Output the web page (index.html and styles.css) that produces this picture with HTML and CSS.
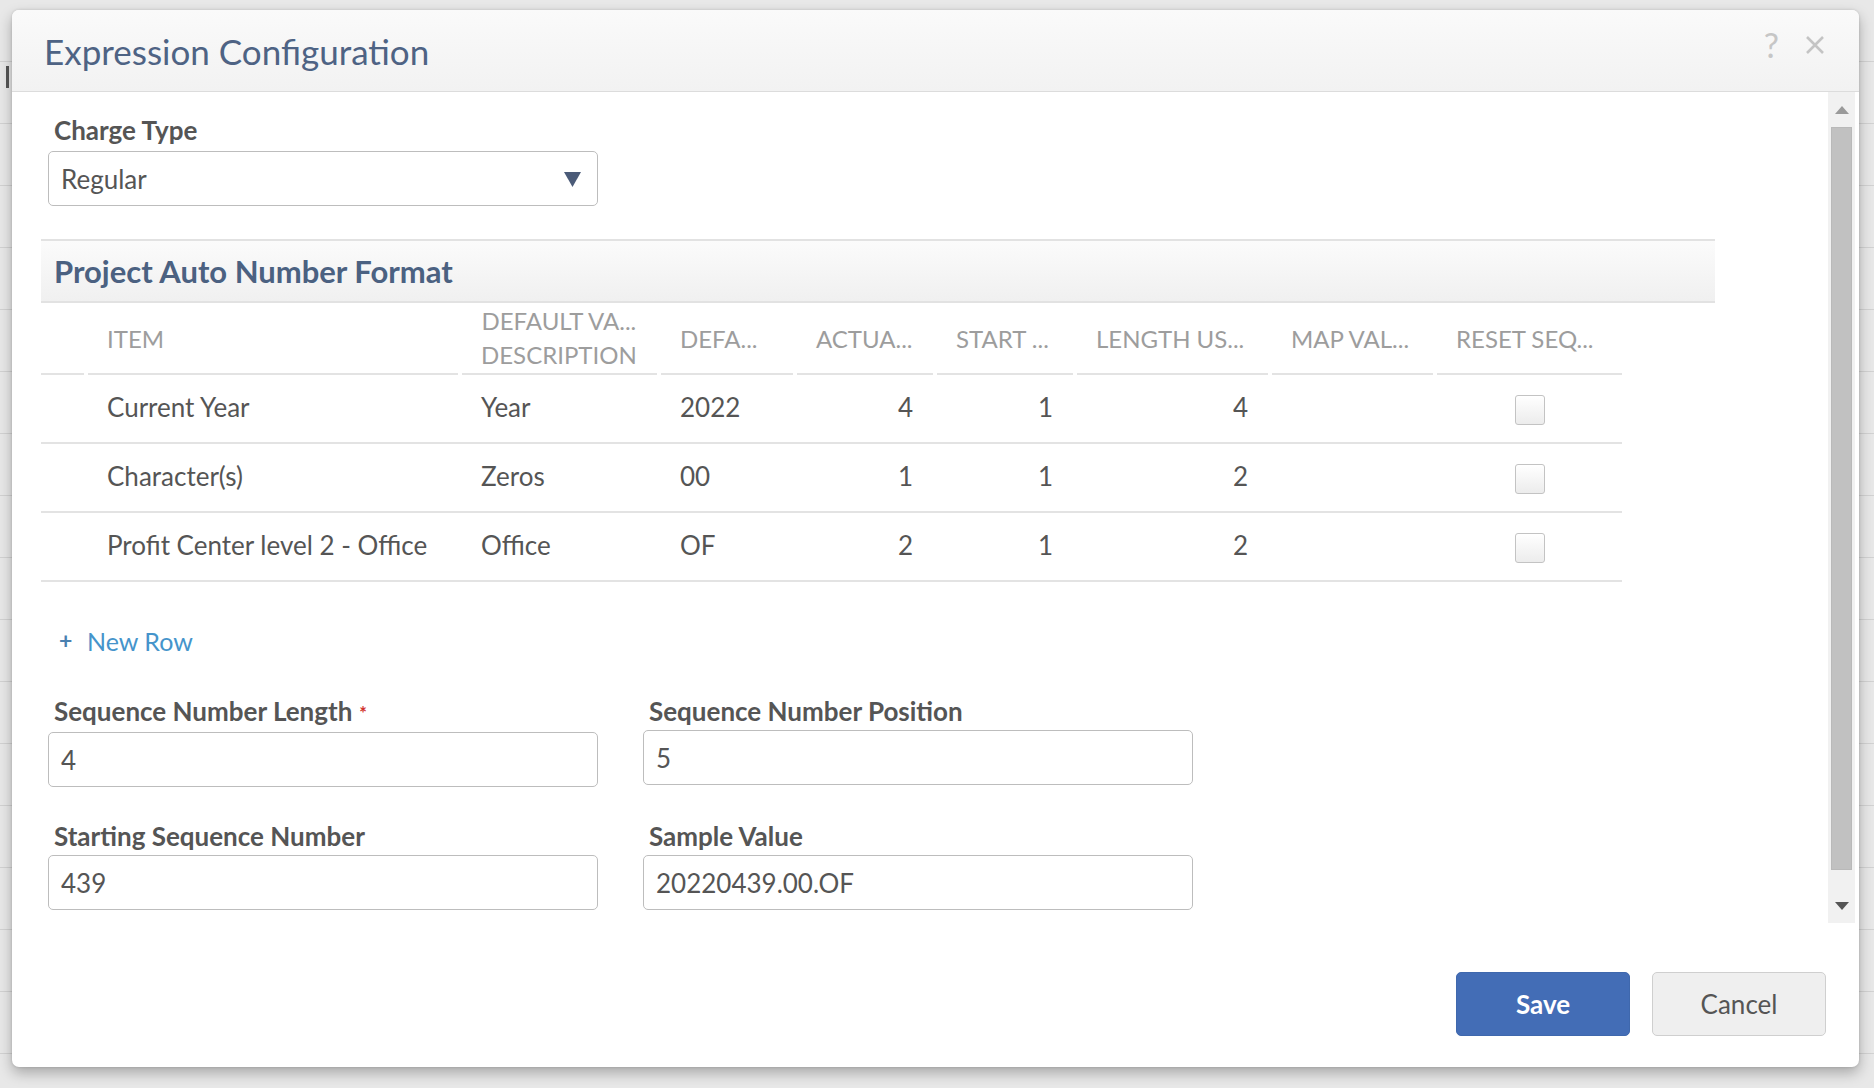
FILE: index.html
```html
<!DOCTYPE html>
<html lang="en">
<head>
<meta charset="utf-8">
<title>Expression Configuration</title>
<link rel="stylesheet" href="styles.css">
</head>
<body>
<div class="backdrop">
  <div class="dialog">
    <div class="dlg-header">
      <h1 class="dlg-title">Expression Configuration</h1>
      <div class="hdr-icons">
        <span class="hdr-help">?</span>
        <svg class="hdr-close" width="20" height="20" viewBox="0 0 20 20"><path d="M2 2 L18 18 M18 2 L2 18" stroke="#c4c4c4" stroke-width="2.6" fill="none"/></svg>
      </div>
    </div>
    <div class="dlg-body">
      <div class="content">
        <div class="field field-charge">
          <label class="field-label">Charge Type</label>
          <div class="select">
            <span class="select-value">Regular</span>
            <svg class="select-arrow" width="17" height="15" viewBox="0 0 17 15"><polygon points="0,0 17,0 8.5,15" fill="#4b5b78"/></svg>
          </div>
        </div>

        <div class="section-band">Project Auto Number Format</div>

        <div class="grid-table">
          <div class="grow ghead">
            <div class="hc"></div>
            <div class="hc">ITEM</div>
            <div class="hc hc-two"><span class="two-lines"><span>DEFAULT VA...</span><span>DESCRIPTION</span></span></div>
            <div class="hc">DEFA...</div>
            <div class="hc">ACTUA...</div>
            <div class="hc">START ...</div>
            <div class="hc">LENGTH US...</div>
            <div class="hc">MAP VAL...</div>
            <div class="hc">RESET SEQ...</div>
          </div>
          <div class="grow gdata">
            <div class="dc"></div>
            <div class="dc">Current Year</div>
            <div class="dc">Year</div>
            <div class="dc">2022</div>
            <div class="dc num">4</div>
            <div class="dc num">1</div>
            <div class="dc num">4</div>
            <div class="dc"></div>
            <div class="dc chk"><span class="checkbox"></span></div>
          </div>
          <div class="grow gdata">
            <div class="dc"></div>
            <div class="dc">Character(s)</div>
            <div class="dc">Zeros</div>
            <div class="dc">00</div>
            <div class="dc num">1</div>
            <div class="dc num">1</div>
            <div class="dc num">2</div>
            <div class="dc"></div>
            <div class="dc chk"><span class="checkbox"></span></div>
          </div>
          <div class="grow gdata">
            <div class="dc"></div>
            <div class="dc">Profit Center level 2 - Office</div>
            <div class="dc">Office</div>
            <div class="dc">OF</div>
            <div class="dc num">2</div>
            <div class="dc num">1</div>
            <div class="dc num">2</div>
            <div class="dc"></div>
            <div class="dc chk"><span class="checkbox"></span></div>
          </div>
        </div>

        <div class="new-row"><span class="plus">+</span><span class="new-row-text">New Row</span></div>

        <div class="fields-grid">
          <div class="field">
            <label class="field-label">Sequence Number Length<span class="req">*</span></label>
            <div class="input">4</div>
          </div>
          <div class="field">
            <label class="field-label">Sequence Number Position</label>
            <div class="input">5</div>
          </div>
          <div class="field">
            <label class="field-label">Starting Sequence Number</label>
            <div class="input">439</div>
          </div>
          <div class="field">
            <label class="field-label">Sample Value</label>
            <div class="input">20220439.00.OF</div>
          </div>
        </div>
      </div>
      <div class="scrollbar">
        <div class="sb-arrow"><svg width="14" height="8" viewBox="0 0 14 8"><polygon points="0,8 14,8 7,0" fill="#9a9a9a"/></svg></div>
        <div class="sb-track"><div class="sb-thumb"></div></div>
        <div class="sb-arrow"><svg width="14" height="8" viewBox="0 0 14 8"><polygon points="0,0 14,0 7,8" fill="#555"/></svg></div>
      </div>
    </div>
    <div class="dlg-footer">
      <button class="btn btn-save">Save</button>
      <button class="btn btn-cancel">Cancel</button>
    </div>
  </div>
</div>
</body>
</html>
```
FILE: styles.css
```css
* { box-sizing: border-box; }

html, body {
  margin: 0;
  padding: 0;
  width: 1874px;
  height: 1088px;
  overflow: hidden;
}

body {
  font-family: "Lato", "Liberation Sans", sans-serif;
  color: #555;
  background-color: #e6e6e6;
  background-image: repeating-linear-gradient(to bottom, #e8e8e8 0, #e8e8e8 61px, #d2d2d2 61px, #d2d2d2 62px);
}

.backdrop {
  position: relative;
  height: 1088px;
  padding: 10px 15px 21px 12px;
  display: flex;
}

.backdrop::before {
  content: "";
  position: absolute;
  left: 6px;
  top: 66px;
  width: 3px;
  height: 22px;
  background: #555;
}

.dialog {
  position: relative;
  width: 1847px;
  height: 1057px;
  background: #fff;
  border-radius: 7px;
  box-shadow: 0 6px 14px rgba(0, 0, 0, 0.28), 0 0 3px rgba(0, 0, 0, 0.15);
  display: flex;
  flex-direction: column;
  overflow: hidden;
}

/* header */
.dlg-header {
  height: 82px;
  flex: none;
  display: flex;
  align-items: center;
  justify-content: space-between;
  padding: 0 34px 0 32px;
  background: linear-gradient(to bottom, #fafafa, #f2f2f2);
  border-bottom: 1px solid #dcdcdc;
}

.dlg-title {
  margin: 0;
  font-family: "Lato", sans-serif;
  font-weight: 400;
  font-size: 35px;
  color: #4e6384;
}

.hdr-icons {
  display: flex;
  align-items: center;
  gap: 26px;
  margin-top: -12px;
}

.hdr-help {
  font-family: "Lato", sans-serif;
  font-size: 34px;
  font-weight: 400;
  color: #c6c6c6;
  line-height: 1;
}

/* body */
.dlg-body {
  height: 831px;
  flex: none;
  display: flex;
}

.content {
  flex: 1;
  overflow: hidden;
  padding: 23px 0 0 29px;
}

.field-label {
  display: block;
  font-family: "Lato", sans-serif;
  font-weight: 700;
  font-size: 26px;
  line-height: 30px;
  color: #555;
  padding-left: 6px;
}

.req {
  color: #d0302c;
  font-size: 18px;
  margin-left: 7px;
  vertical-align: 1px;
}

.field-charge {
  margin-left: 7px;
  width: 550px;
}

.select, .input {
  margin-top: 6px;
  height: 55px;
  border: 1px solid #bdbdbd;
  border-radius: 5px;
  background: #fff;
  display: flex;
  align-items: center;
  padding: 0 14px 0 12px;
  font-size: 26px;
  color: #555;
}

.select {
  justify-content: space-between;
}

.select-arrow {
  margin-right: 2px;
  margin-top: 2px;
}

.section-band {
  margin-top: 33px;
  width: 1674px;
  height: 64px;
  border-top: 2px solid #e2e2e2;
  border-bottom: 2px solid #e2e2e2;
  background: linear-gradient(to bottom, #fbfbfb, #f0f0f0);
  display: flex;
  align-items: center;
  padding-left: 13px;
  font-family: "Lato", sans-serif;
  font-weight: 700;
  font-size: 31px;
  color: #4b6181;
}

/* table */
.grid-table {
  width: 1581px;
}

.grow {
  display: grid;
  grid-template-columns: 43px 370px 195px 132px 136px 136px 191px 161px 185px;
  column-gap: 4px;
}

.ghead {
  height: 72px;
}

.hc {
  border-bottom: 2px solid #e3e3e3;
  display: flex;
  align-items: center;
  padding-left: 19px;
  font-size: 24px;
  color: #9d9d9d;
  white-space: nowrap;
  overflow: hidden;
}

.two-lines {
  display: inline-flex;
  flex-direction: column;
  align-items: center;
  line-height: 34px;
}

.gdata {
  height: 69px;
  border-bottom: 2px solid #e3e3e3;
}

.dc {
  display: flex;
  align-items: center;
  padding-left: 19px;
  padding-bottom: 4px;
  font-size: 26px;
  color: #555;
  white-space: nowrap;
}

.dc.num {
  justify-content: flex-end;
  padding-left: 0;
  padding-right: 20px;
}

.dc.chk {
  justify-content: center;
  padding-left: 0;
  padding-bottom: 0;
}

.checkbox {
  display: block;
  width: 30px;
  height: 30px;
  border: 1px solid #c3c3c3;
  border-radius: 3px;
  background: linear-gradient(to bottom, #ffffff, #ececec);
  box-shadow: inset 0 1px 1px #fff;
  margin-top: 2px;
}

/* new row */
.new-row {
  margin-top: 44px;
  height: 30px;
  display: flex;
  align-items: center;
  padding-left: 18px;
  color: #4594cb;
  font-size: 25px;
}

.plus {
  font-size: 23px;
  font-weight: 700;
  color: #4a80b0;
  width: 28px;
  transform: translateY(-1px);
}

/* fields */
.fields-grid {
  margin-top: 40px;
  margin-left: 7px;
  display: grid;
  grid-template-columns: 550px 550px;
  column-gap: 45px;
  row-gap: 34px;
}

.input {
  margin-top: 4px;
}

/* scrollbar */
.scrollbar {
  width: 27px;
  margin-right: 4px;
  background: #f1f1f1;
  display: flex;
  flex-direction: column;
}

.sb-arrow {
  height: 35px;
  display: flex;
  align-items: center;
  justify-content: center;
}

.sb-track {
  flex: 1;
  padding: 0 3px;
}

.sb-thumb {
  height: 743px;
  background: #c1c1c1;
  border: 1px solid #b9b9b9;
}

/* footer */
.dlg-footer {
  flex: 1;
  display: flex;
  justify-content: flex-end;
  align-items: flex-end;
  gap: 22px;
  padding: 0 33px 31px 0;
}

.btn {
  width: 174px;
  height: 64px;
  border-radius: 5px;
  font-family: "Lato", sans-serif;
  font-size: 26px;
  cursor: pointer;
}

.btn-save {
  background: #436db6;
  border: 1px solid #3f68ad;
  color: #fff;
  font-weight: 700;
}

.btn-cancel {
  background: #efefef;
  border: 1px solid #cfcfcf;
  color: #555;
  font-weight: 400;
}
```
